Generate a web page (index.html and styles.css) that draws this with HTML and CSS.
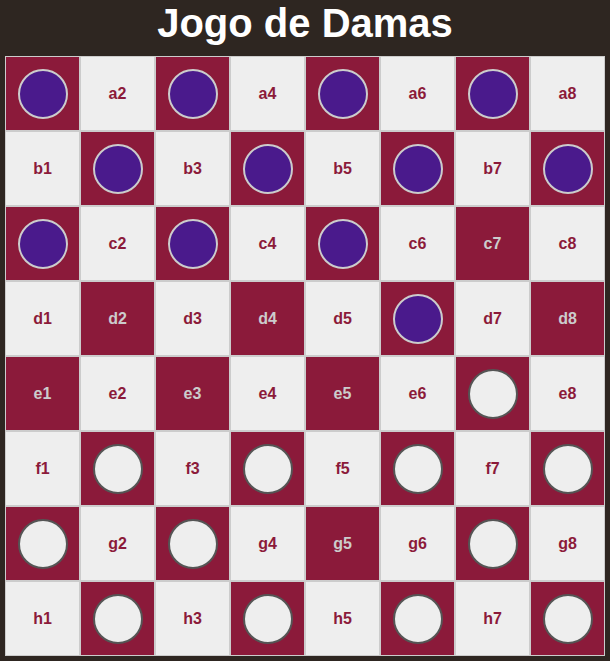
FILE: index.html
```html
<!DOCTYPE html>
<html lang="pt">
<head>
<meta charset="utf-8">
<title>Jogo de Damas</title>
<link rel="stylesheet" href="styles.css">
</head>
<body>
<h1 class="title">Jogo de Damas</h1>
<div class="board">
  <div class="cell dark"><span class="piece black"></span></div>
  <div class="cell light">a2</div>
  <div class="cell dark"><span class="piece black"></span></div>
  <div class="cell light">a4</div>
  <div class="cell dark"><span class="piece black"></span></div>
  <div class="cell light">a6</div>
  <div class="cell dark"><span class="piece black"></span></div>
  <div class="cell light">a8</div>

  <div class="cell light">b1</div>
  <div class="cell dark"><span class="piece black"></span></div>
  <div class="cell light">b3</div>
  <div class="cell dark"><span class="piece black"></span></div>
  <div class="cell light">b5</div>
  <div class="cell dark"><span class="piece black"></span></div>
  <div class="cell light">b7</div>
  <div class="cell dark"><span class="piece black"></span></div>

  <div class="cell dark"><span class="piece black"></span></div>
  <div class="cell light">c2</div>
  <div class="cell dark"><span class="piece black"></span></div>
  <div class="cell light">c4</div>
  <div class="cell dark"><span class="piece black"></span></div>
  <div class="cell light">c6</div>
  <div class="cell dark">c7</div>
  <div class="cell light">c8</div>

  <div class="cell light">d1</div>
  <div class="cell dark">d2</div>
  <div class="cell light">d3</div>
  <div class="cell dark">d4</div>
  <div class="cell light">d5</div>
  <div class="cell dark"><span class="piece black"></span></div>
  <div class="cell light">d7</div>
  <div class="cell dark">d8</div>

  <div class="cell dark">e1</div>
  <div class="cell light">e2</div>
  <div class="cell dark">e3</div>
  <div class="cell light">e4</div>
  <div class="cell dark">e5</div>
  <div class="cell light">e6</div>
  <div class="cell dark"><span class="piece white"></span></div>
  <div class="cell light">e8</div>

  <div class="cell light">f1</div>
  <div class="cell dark"><span class="piece white"></span></div>
  <div class="cell light">f3</div>
  <div class="cell dark"><span class="piece white"></span></div>
  <div class="cell light">f5</div>
  <div class="cell dark"><span class="piece white"></span></div>
  <div class="cell light">f7</div>
  <div class="cell dark"><span class="piece white"></span></div>

  <div class="cell dark"><span class="piece white"></span></div>
  <div class="cell light">g2</div>
  <div class="cell dark"><span class="piece white"></span></div>
  <div class="cell light">g4</div>
  <div class="cell dark">g5</div>
  <div class="cell light">g6</div>
  <div class="cell dark"><span class="piece white"></span></div>
  <div class="cell light">g8</div>

  <div class="cell light">h1</div>
  <div class="cell dark"><span class="piece white"></span></div>
  <div class="cell light">h3</div>
  <div class="cell dark"><span class="piece white"></span></div>
  <div class="cell light">h5</div>
  <div class="cell dark"><span class="piece white"></span></div>
  <div class="cell light">h7</div>
  <div class="cell dark"><span class="piece white"></span></div>
</div>
</body>
</html>
```
FILE: styles.css
```css
html, body {
  margin: 0;
  padding: 0;
}
body {
  background: #2e2621;
  font-family: "Liberation Sans", Arial, sans-serif;
  padding: 0 5px;
  height: 661px;
  box-sizing: border-box;
}
.title {
  margin: 0 0 10px 0;
  font-size: 40px;
  line-height: 46px;
  font-weight: bold;
  color: #ffffff;
  text-align: center;
}
.board {
  display: grid;
  grid-template-columns: repeat(8, 75px);
  grid-template-rows: repeat(8, 75px);
  width: 600px;
}
.cell {
  box-sizing: border-box;
  border: 1px solid #cccccc;
  display: flex;
  align-items: center;
  justify-content: center;
  font-size: 16px;
  font-weight: bold;
}
.dark {
  background: #8b1a3a;
  color: #cccccc;
}
.light {
  background: #eeeeee;
  color: #8b1a3a;
}
.piece {
  box-sizing: border-box;
  width: 50px;
  height: 50px;
  border-radius: 50%;
  border: 2px solid;
}
.piece.black {
  background: #4a1a8c;
  border-color: #cccccc;
}
.piece.white {
  background: #eeeeee;
  border-color: #555555;
}
```
